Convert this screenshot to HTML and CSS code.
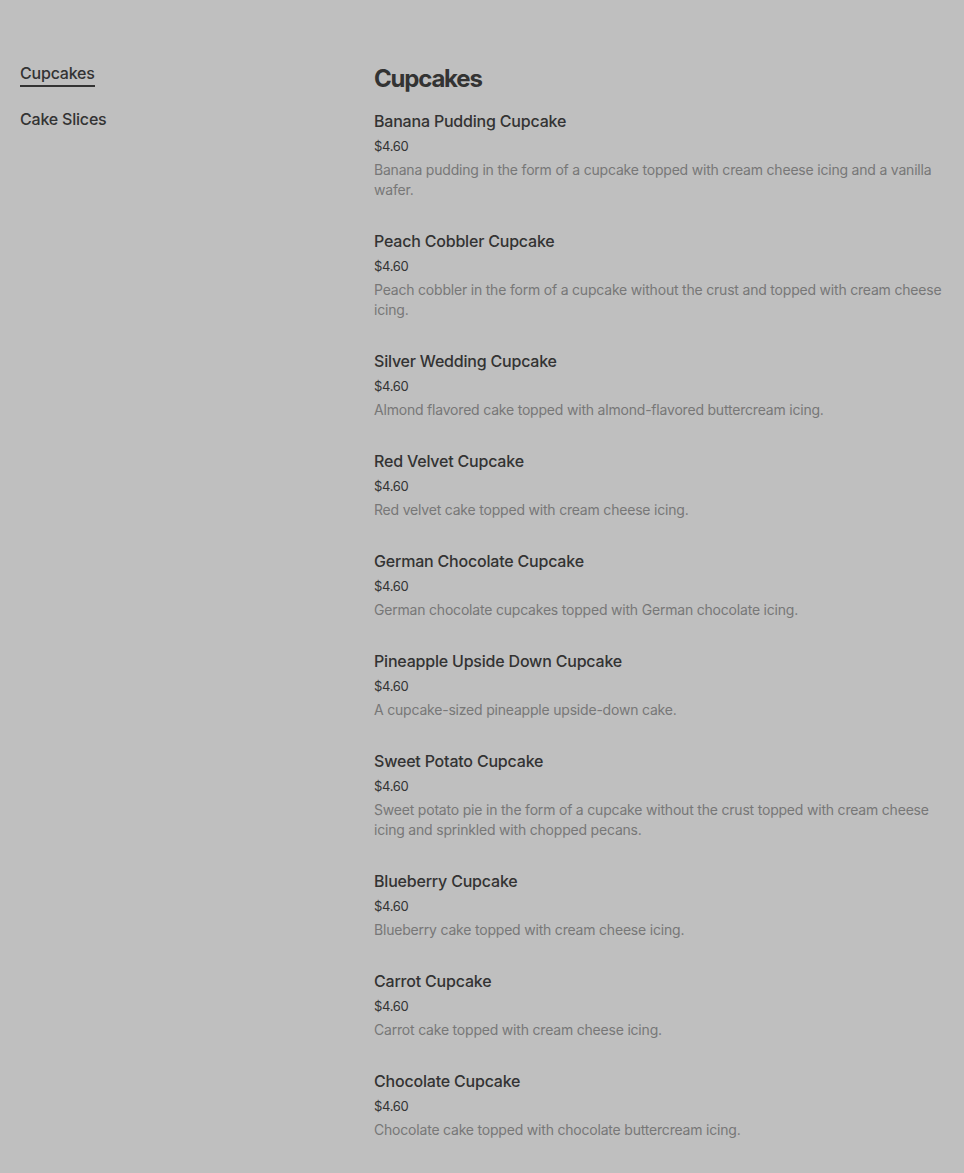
FILE: index.html
```html
<!DOCTYPE html>
<html lang="en">
<head>
    <meta charset="UTF-8">
    <meta name="viewport" content="width=device-width, initial-scale=1.0">
    <title>Menu</title>
    <link rel="stylesheet" href="styles.css">
</head>
<body>
    <div class="container">
        <nav class="sidenav">
            <ul>
                <li><a href="#" class="active">Cupcakes</a></li>
                <li><a href="#">Cake Slices</a></li>
            </ul>
        </nav><!-- sidenav -->

        <main class="menu">
            <h1>Cupcakes</h1>
            <ul class="items">
                <li class="item">
                    <h2>Banana Pudding Cupcake</h2>
                    <p class="price">$4.60</p>
                    <p class="desc">Banana pudding in the form of a cupcake topped with cream cheese icing and a vanilla wafer.</p>
                </li>
                <li class="item">
                    <h2>Peach Cobbler Cupcake</h2>
                    <p class="price">$4.60</p>
                    <p class="desc">Peach cobbler in the form of a cupcake without the crust and topped with cream cheese icing.</p>
                </li>
                <li class="item">
                    <h2>Silver Wedding Cupcake</h2>
                    <p class="price">$4.60</p>
                    <p class="desc">Almond flavored cake topped with almond-flavored buttercream icing.</p>
                </li>
                <li class="item">
                    <h2>Red Velvet Cupcake</h2>
                    <p class="price">$4.60</p>
                    <p class="desc">Red velvet cake topped with cream cheese icing.</p>
                </li>
                <li class="item">
                    <h2>German Chocolate Cupcake</h2>
                    <p class="price">$4.60</p>
                    <p class="desc">German chocolate cupcakes topped with German chocolate icing.</p>
                </li>
                <li class="item">
                    <h2>Pineapple Upside Down Cupcake</h2>
                    <p class="price">$4.60</p>
                    <p class="desc">A cupcake-sized pineapple upside-down cake.</p>
                </li>
                <li class="item">
                    <h2>Sweet Potato Cupcake</h2>
                    <p class="price">$4.60</p>
                    <p class="desc">Sweet potato pie in the form of a cupcake without the crust topped with cream cheese icing and sprinkled with chopped pecans.</p>
                </li>
                <li class="item">
                    <h2>Blueberry Cupcake</h2>
                    <p class="price">$4.60</p>
                    <p class="desc">Blueberry cake topped with cream cheese icing.</p>
                </li>
                <li class="item">
                    <h2>Carrot Cupcake</h2>
                    <p class="price">$4.60</p>
                    <p class="desc">Carrot cake topped with cream cheese icing.</p>
                </li>
                <li class="item">
                    <h2>Chocolate Cupcake</h2>
                    <p class="price">$4.60</p>
                    <p class="desc">Chocolate cake topped with chocolate buttercream icing.</p>
                </li>
                <li class="item">
                    <h2>Strawberry Cupcake</h2>
                    <p class="price">$4.60</p>
                    <p class="desc">Strawberry cake topped with strawberry buttercream icing.</p>
                </li>
            </ul>
        </main><!-- menu -->
    </div><!-- container -->
</body>
</html>
```

FILE: styles.css
```css
html, body{
    margin: 0;
    padding: 0;
    background: #bfbfbf;
}
body{
    font-family: Inter, "Liberation Sans", sans-serif;
    color: #333;
}
ul, li{
    list-style: none;
    margin: 0;
    padding: 0;
}
h1, h2, p{
    margin: 0;
}
.container{
    display: grid;
    grid-template-columns: 354px 1fr;
    padding: 61px 20px 0 20px;
}
.sidenav ul{
    display: flex;
    flex-direction: column;
    gap: 20px;
}
.sidenav a{
    display: inline-block;
    font-size: 16px;
    font-weight: 500;
    line-height: 24px;
    letter-spacing: -0.2px;
    color: #333;
    text-decoration: none;
    border-bottom: 2px solid transparent;
}
.sidenav a.active{
    border-bottom-color: #333;
}
.menu h1{
    font-size: 24px;
    font-weight: 700;
    line-height: 32px;
    margin: 2px 0 14px;
    letter-spacing: -1.2px;
}
.item{
    padding-bottom: 29px;
}
.item h2{
    font-size: 16px;
    font-weight: 500;
    line-height: 24px;
    letter-spacing: -0.2px;
}
.item .price{
    font-size: 13px;
    line-height: 24px;
    letter-spacing: -0.3px;
    margin-top: 1px;
}
.item .desc{
    font-size: 14px;
    line-height: 20px;
    letter-spacing: -0.2px;
    margin-top: 2px;
    color: #777;
}
```
